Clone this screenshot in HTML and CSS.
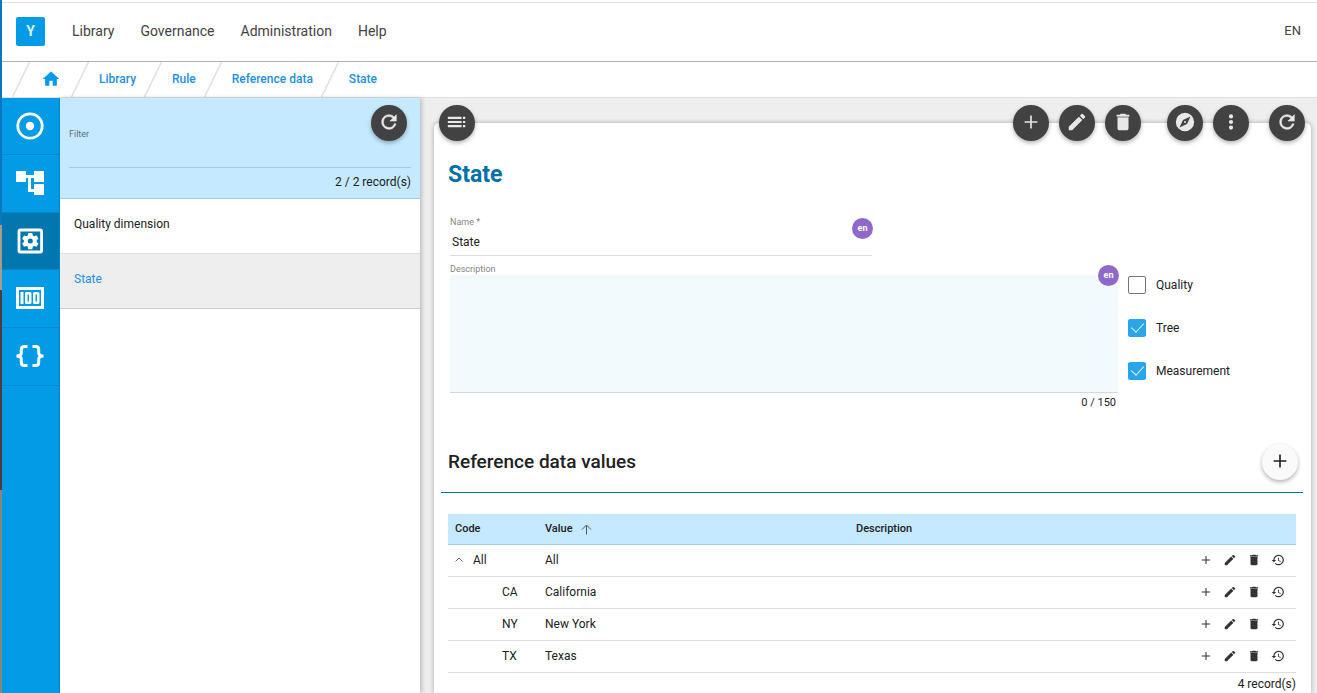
FILE: index.html
```html
<!DOCTYPE html>
<html lang="en">
<head>
<meta charset="utf-8">
<title>State - Reference data</title>
<link rel="stylesheet" href="styles.css">
</head>
<body>
<svg class="defs" aria-hidden="true">
  <symbol id="i-plus" viewBox="0 0 24 24"><path d="M19 12.9h-6.1V19h-1.8v-6.1H5v-1.8h6.1V5h1.8v6.1H19z"/></symbol>
  <symbol id="i-edit" viewBox="0 0 24 24"><path d="M3 17.25V21h3.75L17.81 9.94l-3.75-3.75L3 17.25zM20.71 7.04a1 1 0 0 0 0-1.41l-2.34-2.34a1 1 0 0 0-1.41 0l-1.83 1.83 3.75 3.75 1.83-1.83z"/></symbol>
  <symbol id="i-trash" viewBox="0 0 24 24"><path d="M6 19c0 1.100.9 2 2 2h8c1.100 0 2-.9 2-2V7H6v12zM19 4h-3.500l-1-1h-5l-1 1H5v2h14V4z"/><path d="M6 6h12v1H6z" opacity=".7"/></symbol>
  <symbol id="i-refresh" viewBox="0 0 24 24"><path d="M17.650 6.350A7.960 7.960 0 0 0 12 4a8 8 0 1 0 7.730 10h-2.080A6 6 0 1 1 12 6c1.660 0 3.140.69 4.220 1.780L13 11h7V4l-2.350 2.350z" stroke="currentColor" stroke-width=".6"/></symbol>
  <symbol id="i-toc" viewBox="0 0 24 24"><path d="M2 8.800h15V6.400H2v2.400zm0 4.400h15v-2.400H2v2.400zm0 4.400h15v-2.400H2v2.400zm16.500 0H21v-2.400h-2.500v2.400zm0-11.200v2.400H21V6.400h-2.500zm0 6.800H21v-2.400h-2.500v2.400z"/></symbol>
  <symbol id="i-explore" viewBox="0 0 24 24"><path d="M12 10.900a1.100 1.100 0 1 0 0 2.200 1.100 1.100 0 0 0 0-2.200zM12 2a10 10 0 1 0 0 20 10 10 0 0 0 0-20zm2.190 12.190L6 18l3.810-8.190L18 6l-3.810 8.190z"/></symbol>
  <symbol id="i-more" viewBox="0 0 24 24"><path d="M12 8.200a2.300 2.300 0 1 0 0-4.600 2.300 2.300 0 0 0 0 4.600zm0 1.500a2.300 2.300 0 1 0 0 4.600 2.300 2.300 0 0 0 0-4.600zm0 6.100a2.300 2.300 0 1 0 0 4.600 2.300 2.300 0 0 0 0-4.600z"/></symbol>
  <symbol id="i-history" viewBox="0 0 24 24"><path d="M13 3a9 9 0 0 0-9 9H1l3.890 3.890.07.14L9 12H6a7 7 0 1 1 2.060 4.940l-1.420 1.420A9 9 0 1 0 13 3zm-1 5v5l4.280 2.540.720-1.210-3.500-2.080V8H12z"/></symbol>
  <symbol id="i-slash" viewBox="0 0 18 35"><path d="M17.500 0L.5 35" fill="none" stroke="#e0e0e0" stroke-width="1.500"/></symbol>
</svg>

<div class="app">
  <header class="topbar">
    <a class="logo" href="#">Y</a>
    <nav class="menu" aria-label="Main">
      <a href="#">Library</a><a href="#">Governance</a><a href="#">Administration</a><a href="#">Help</a>
    </nav>
    <button class="lang" type="button">EN</button>
  </header>

  <nav class="crumbs" aria-label="Breadcrumb">
    <svg class="slash"><use href="#i-slash"/></svg>
    <a class="home" href="#" aria-label="Home"><svg viewBox="0 0 24 24"><path d="M10 20v-6h4v6h5v-8h3L12 3 2 12h3v8z"/></svg></a>
    <svg class="slash"><use href="#i-slash"/></svg>
    <a href="#">Library</a>
    <svg class="slash"><use href="#i-slash"/></svg>
    <a href="#">Rule</a>
    <svg class="slash"><use href="#i-slash"/></svg>
    <a href="#">Reference data</a>
    <svg class="slash"><use href="#i-slash"/></svg>
    <a href="#">State</a>
  </nav>

  <div class="body">
    <nav class="rail" aria-label="Sections">
      <a href="#" aria-label="Domains"><svg viewBox="0 0 28 28"><circle cx="14" cy="14" r="12.200" fill="none" stroke="#fff" stroke-width="2.800"/><circle cx="14" cy="14" r="4.200"/></svg></a>
      <a href="#" aria-label="Hierarchy"><svg viewBox="0 0 28 28"><path d="M28 13V2H18v4h-8V2H0v11h10V9h2v14h6v3h10V15H18v5h-3V9h3v4z"/></svg></a>
      <a class="on" href="#" aria-label="Rules"><svg viewBox="0 0 28 28"><rect x="3" y="3" width="22.600" height="22" rx="1.500" fill="none" stroke="#fff" stroke-width="2.800"/><path fill-rule="evenodd" d="M12.300 6h4l.5 2.500 1.400.8 2.400-.8 1.900 3.300-1.800 1.500v1.600l1.800 1.500-1.900 3.300-2.400-.8-1.400.8-.5 2.500h-4l-.5-2.500-1.400-.8-2.400.8-1.900-3.300 1.800-1.500v-1.600L6.100 11.800 8 8.500l2.400.8 1.400-.8zM14.300 11.500a2.500 2.500 0 1 0 0 5 2.500 2.500 0 0 0 0-5z"/></svg></a>
      <a href="#" aria-label="Values"><svg viewBox="0 0 28 28"><path fill-rule="evenodd" d="M0 3h28v22H0zM3 6v16h22V6z"/><path fill-rule="evenodd" d="M4.500 8h3v12h-3zM10 8h4q1.500 0 1.500 1.500v9q0 1.500-1.500 1.500h-4q-1 0-1-1.500v-9Q9 8 10 8zM11.500 10.500v7H13v-7zM18.500 8h3.500q1.500 0 1.500 1.500v9q0 1.500-1.500 1.500h-3.500q-1.500 0-1.500-1.500v-9Q17 8 18.500 8zM19.500 10.500v7H21v-7z"/></svg></a>
      <a href="#" aria-label="Scripts"><svg viewBox="0 0 28 28"><path d="M11.500 4.500H8.300q-3 0-3 3v3.200q0 3.300-4.800 3.300 4.800 0 4.800 3.300v3.200q0 3 3 3h3.200M16.500 4.500h3.200q3 0 3 3v3.200q0 3.300 4.800 3.300-4.800 0-4.800 3.300v3.200q0 3-3 3h-3.200" fill="none" stroke="#fff" stroke-width="3"/></svg></a>
    </nav>

    <aside class="list">
      <div class="filter">
        <label for="filter">Filter</label>
        <input id="filter" type="text">
        <button class="fab filter-refresh" type="button" aria-label="Refresh list"><svg><use href="#i-refresh"/></svg></button>
        <p>2 / 2 record(s)</p>
      </div>
      <a class="entry" href="#">Quality dimension</a>
      <a class="entry current" href="#">State</a>
    </aside>

    <main class="detail">
      <div class="tools">
        <button class="fab" type="button" aria-label="Toggle list"><svg><use href="#i-toc"/></svg></button>
        <div class="group push">
          <button class="fab" type="button" aria-label="Add"><svg><use href="#i-plus"/></svg></button>
          <button class="fab" type="button" aria-label="Edit"><svg><use href="#i-edit"/></svg></button>
          <button class="fab" type="button" aria-label="Delete"><svg><use href="#i-trash"/></svg></button>
        </div>
        <div class="group explore">
          <button class="fab" type="button" aria-label="Explore"><svg><use href="#i-explore"/></svg></button>
          <button class="fab" type="button" aria-label="More"><svg><use href="#i-more"/></svg></button>
        </div>
        <button class="fab" type="button" aria-label="Refresh"><svg><use href="#i-refresh"/></svg></button>
      </div>

      <section class="card">
        <h1>State</h1>
        <div class="form">
          <div class="field name">
            <label for="name">Name *</label>
            <input id="name" type="text" value="State">
            <span class="badge">en</span>
          </div>
          <div class="row">
            <div class="field desc">
              <label for="desc">Description</label>
              <textarea id="desc" maxlength="150"></textarea>
              <span class="badge">en</span>
              <p>0 / 150</p>
            </div>
            <div class="checks">
              <label><input type="checkbox">Quality</label>
              <label><input type="checkbox" checked>Tree</label>
              <label><input type="checkbox" checked>Measurement</label>
            </div>
          </div>
        </div>

        <div class="section-head">
          <h2>Reference data values</h2>
          <button class="fab light" type="button" aria-label="Add value"><svg><use href="#i-plus"/></svg></button>
        </div>

        <table class="values">
          <colgroup><col class="c-code"><col class="c-value"><col><col class="c-act"></colgroup>
          <thead>
            <tr><th>Code</th><th>Value<svg class="sort" viewBox="0 0 11 11"><path d="M5.500 10.500V1M1 5.500l4.500-4.500L10 5.500" fill="none" stroke="#555" /></svg></th><th>Description</th><th></th></tr>
          </thead>
          <tbody>
            <tr><td><button class="toggle" type="button" aria-label="Collapse"><svg viewBox="0 0 8 5"><path d="M.5 4.500L4 1l3.500 3.500" fill="none" stroke="#666"/></svg></button>All</td><td>All</td><td></td><td><div class="acts"><button type="button" aria-label="Add"><svg><use href="#i-plus"/></svg></button><button type="button" aria-label="Edit"><svg><use href="#i-edit"/></svg></button><button type="button" aria-label="Delete"><svg><use href="#i-trash"/></svg></button><button type="button" aria-label="History"><svg><use href="#i-history"/></svg></button></div></td></tr>
            <tr><td class="child">CA</td><td>California</td><td></td><td><div class="acts"><button type="button" aria-label="Add"><svg><use href="#i-plus"/></svg></button><button type="button" aria-label="Edit"><svg><use href="#i-edit"/></svg></button><button type="button" aria-label="Delete"><svg><use href="#i-trash"/></svg></button><button type="button" aria-label="History"><svg><use href="#i-history"/></svg></button></div></td></tr>
            <tr><td class="child">NY</td><td>New York</td><td></td><td><div class="acts"><button type="button" aria-label="Add"><svg><use href="#i-plus"/></svg></button><button type="button" aria-label="Edit"><svg><use href="#i-edit"/></svg></button><button type="button" aria-label="Delete"><svg><use href="#i-trash"/></svg></button><button type="button" aria-label="History"><svg><use href="#i-history"/></svg></button></div></td></tr>
            <tr><td class="child">TX</td><td>Texas</td><td></td><td><div class="acts"><button type="button" aria-label="Add"><svg><use href="#i-plus"/></svg></button><button type="button" aria-label="Edit"><svg><use href="#i-edit"/></svg></button><button type="button" aria-label="Delete"><svg><use href="#i-trash"/></svg></button><button type="button" aria-label="History"><svg><use href="#i-history"/></svg></button></div></td></tr>
          </tbody>
        </table>
        <p class="total">4 record(s)</p>
      </section>
    </main>
  </div>
</div>
</body>
</html>
```

FILE: styles.css
```css
* { box-sizing: border-box; }
body {
  margin: 0;
  padding-left: 2px;
  font: 12px/16px Roboto, "Liberation Sans", sans-serif;
  color: #212121;
  background: linear-gradient(#0b76bb 0 225px, #a59c90 225px 290px, #4b3d3c 290px 490px, #8b847b 490px);
}
p, h1, h2 { margin: 0; }
a { text-decoration: none; color: inherit; }
button { font: inherit; color: inherit; border: 0; padding: 0; background: none; cursor: pointer; }
input, textarea { font: inherit; color: inherit; }
svg { display: block; fill: currentColor; }
.defs { position: absolute; width: 0; height: 0; }

.app {
  display: flex;
  flex-direction: column;
  min-height: 100vh;
  padding-top: 2px;
  background: #fff;
}

/* Top bar */
.topbar {
  display: flex;
  align-items: center;
  height: 60px;
  padding: 0 16px 2px 14px;
  border-top: 1px solid #e0e0e0;
  border-bottom: 1px solid #b0b0b0;
}
.logo {
  width: 29px;
  border-radius: 2px;
  background: #039be5;
  color: #d9f1ff;
  font-weight: 700;
  font-size: 14px;
  line-height: 29px;
  text-align: center;
}
.menu {
  display: flex;
  gap: 26px;
  margin-left: 27px;
  font-size: 14px;
  color: #424242;
}
.lang { margin-left: auto; font-size: 13px; color: #424242; }

/* Breadcrumb */
.crumbs {
  display: flex;
  align-items: center;
  height: 36px;
  padding-left: 10px;
  border-bottom: 1px solid #e0e0e0;
  color: #1e90dc;
  font-weight: 500;
}
.crumbs a { padding: 0 8px 1px 10px; }
.crumbs .home { padding: 0 10px 1px 11px; }
.home svg { width: 20px; height: 20px; color: #039be5; }
.slash { width: 18px; height: 35px; }

.body { flex: 1; display: flex; }

/* Icon rail */
.rail {
  flex: none;
  display: grid;
  grid-template-rows: 57px 58px 57px 58px 58px;
  width: 58px;
  background: #039be5;
  border-right: 1px solid #0288d1;
  color: #fff;
}
.rail a { display: grid; place-items: center; padding: 0 2px 1px 0; border-bottom: 1px solid #0288d1; }
.rail .on { background: #0277ad; }
.rail svg { width: 28px; height: 28px; }

/* Round buttons */
.fab {
  display: grid;
  place-items: center;
  width: 36px;
  height: 36px;
  border-radius: 50%;
  background: #424242;
  color: #e8e8e8;
  box-shadow: 0 2px 4px rgba(0, 0, 0, .3);
}
.fab svg { width: 22px; height: 22px; margin-bottom: 2px; }
.fab.light { background: #fafafa; color: #212121; }

/* Record list */
.list {
  position: relative;
  flex: none;
  width: 360px;
  background: #fff;
  box-shadow: 2px 0 4px rgba(0, 0, 0, .2);
}
.filter {
  position: relative;
  padding: 30px 9px 8px;
  background: #c5eaff;
  border-bottom: 1px solid #a3cde4;
}
.filter label { display: block; font-size: 9px; line-height: 12px; color: #5d6f79; }
.filter input {
  display: block;
  width: 100%;
  height: 28px;
  border: 0;
  border-bottom: 1px solid #a3cde4;
  background: none;
  outline: 0;
}
.filter p { margin-top: 6px; text-align: right; }
.filter-refresh { position: absolute; top: 7px; right: 13px; }
.entry { display: block; padding: 17px 14px 21px; border-bottom: 1px solid #ddd; }
.current { background: #eee; color: #1e90dc; border-color: #ccc; }

/* Detail */
.detail {
  flex: 1;
  display: flex;
  flex-direction: column;
  min-width: 0;
  padding: 7px 6px 0 14px;
  background: #eee;
}
.tools { position: relative; z-index: 1; display: flex; padding: 0 6px 0 5px; }
.group { display: flex; gap: 10px; }
.push { margin-left: auto; }
.explore { margin: 0 20px 0 26px; }
.card {
  flex: 1;
  margin-top: -18px;
  padding: 38px 8px 0 7px;
  background: #fff;
  border-radius: 5px 5px 0 0;
  box-shadow: 0 0 5px rgba(0, 0, 0, .3);
}
h1 { margin-left: 7px; font-size: 23px; line-height: 28px; font-weight: 700; color: #0271a7; }

.form { padding: 0 9px; margin-top: 27px; }
.field { position: relative; }
.field > label { display: block; font-size: 9px; line-height: 12px; color: #858585; }
.field input {
  display: block;
  width: 100%;
  height: 28px;
  padding: 0 2px;
  border: 0;
  border-bottom: 1px solid #ddd;
  outline: 0;
}
.name { width: 50%; margin-bottom: 7px; }
.row { display: flex; gap: 10px; }
.desc { flex: 1; }
.field textarea {
  display: block;
  width: 100%;
  height: 118px;
  border: 0;
  border-bottom: 1px solid #cfd8dc;
  background: #f3fafe;
  resize: none;
  outline: 0;
}
.desc p { padding: 2px 2px 0; text-align: right; font-size: 11px; }
.badge {
  position: absolute;
  top: 2px;
  right: -1px;
  width: 21px;
  border-radius: 50%;
  background: #8e69c9;
  color: #fff;
  font-size: 9px;
  font-weight: 700;
  line-height: 21px;
  text-align: center;
}
.checks { display: grid; align-content: start; gap: 25px; width: 166px; padding-top: 13px; }
.checks label { display: flex; align-items: center; gap: 10px; line-height: 18px; }
.checks input {
  appearance: none;
  width: 18px;
  height: 18px;
  margin: 0;
  border: 1px solid #757575;
  border-radius: 2px;
}
.checks input:checked { display: grid; place-items: center; border-color: #29a5ea; background: #29a5ea; }
.checks input:checked::after {
  content: "";
  width: 6px;
  height: 11px;
  margin-bottom: 5px;
  border: solid #e3f4ff;
  border-width: 0 1px 1px 0;
  transform: rotate(42deg);
}

.section-head {
  display: flex;
  align-items: center;
  justify-content: space-between;
  margin-top: 33px;
  padding: 0 5px 12px 7px;
  border-bottom: 1px solid #0271a7;
}
h2 { font-size: 19px; line-height: 24px; font-weight: 500; }

/* Values table */
.values {
  width: calc(100% - 14px);
  margin: 21px 7px 0;
  border-collapse: collapse;
  table-layout: fixed;
}
.c-code { width: 90px; }
.c-value { width: 311px; }
.c-act { width: 110px; }
.values th, .values td { height: 32px; padding: 0 0 0 7px; text-align: left; border-bottom: 1px solid #ddd; }
.values th { height: 30px; background: #c5eaff; border-color: #a3cde4; font-size: 11px; font-weight: 500; }
.values .child { padding-left: 54px; }
.sort { display: inline-block; width: 11px; height: 11px; margin-left: 8px; vertical-align: -3px; }
.toggle { margin-right: 10px; vertical-align: 2px; }
.toggle svg { width: 8px; height: 5px; }
.acts { display: flex; justify-content: flex-end; gap: 10px; padding-right: 11px; color: #333; }
.acts svg { width: 14px; height: 14px; }
.total { padding: 3px 7px 0; text-align: right; }
```
